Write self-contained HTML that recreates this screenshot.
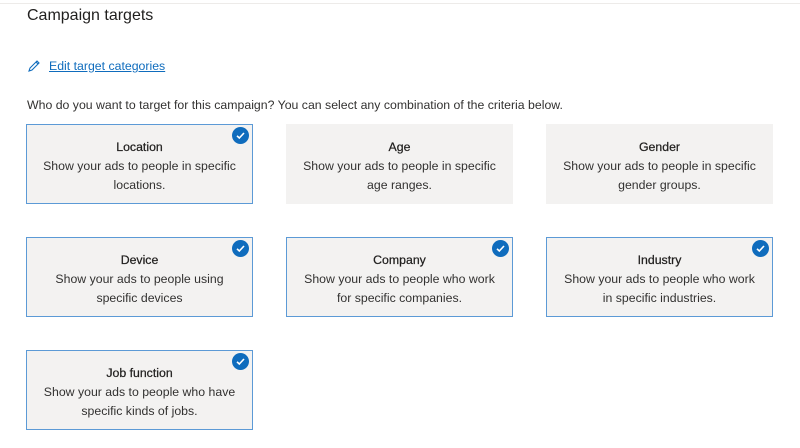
<!DOCTYPE html>
<html><head><style>
body{margin:0;width:800px;height:448px;background:#fff;font-family:"Liberation Sans",sans-serif;color:#323130;position:relative;overflow:hidden}
.top{position:absolute;left:0;top:3px;width:800px;height:1px;background:#edebe9}
h1{position:absolute;left:27px;top:7px;margin:0;font-size:16px;font-weight:normal;color:#201f1e}
.link{position:absolute;left:27px;top:59px;font-size:12.3px;color:#0f6cbd}
.link span{position:absolute;left:22px;top:0px;text-decoration:underline;white-space:nowrap}
.q{position:absolute;left:27px;top:98px;font-size:12.3px;white-space:nowrap}
.card{position:absolute;width:227px;height:80px;background:#f3f2f1;box-sizing:border-box;text-align:center;font-size:12.3px;line-height:19px;padding-top:14px}
.card.sel{border:1px solid #5c9ad6;padding-top:13px}
.card b{font-weight:normal;color:#201f1e;display:block;-webkit-text-stroke:0.25px #201f1e}
.chk{position:absolute;right:3px;top:2px;width:17px;height:17px;border-radius:50%;background:#0f6cbd}
</style></head><body>
<div class="top"></div>
<h1>Campaign targets</h1>
<div class="link"><svg width="14" height="14" viewBox="0 0 14 14" style="position:absolute;left:0;top:0px"><path d="M2 12 L3 9 L10 2 L12 4 L5 11 Z M9 3 L11 5" fill="none" stroke="#0f6cbd" stroke-width="1.1"/></svg><span>Edit target categories</span></div>
<div class="q">Who do you want to target for this campaign? You can select any combination of the criteria below.</div>

<div class="card sel" style="left:26px;top:124px"><b>Location</b>Show your ads to people in specific<br>locations.<div class="chk"><svg width="17" height="17" viewBox="0 0 17 17"><path d="M5 8.8 L7.3 11 L12 6" fill="none" stroke="#fff" stroke-width="1.6"/></svg></div></div>
<div class="card" style="left:286px;top:124px"><b>Age</b>Show your ads to people in specific<br>age ranges.</div>
<div class="card" style="left:546px;top:124px"><b>Gender</b>Show your ads to people in specific<br>gender groups.</div>

<div class="card sel" style="left:26px;top:237px"><b>Device</b>Show your ads to people using<br>specific devices<div class="chk"><svg width="17" height="17" viewBox="0 0 17 17"><path d="M5 8.8 L7.3 11 L12 6" fill="none" stroke="#fff" stroke-width="1.6"/></svg></div></div>
<div class="card sel" style="left:286px;top:237px"><b>Company</b>Show your ads to people who work<br>for specific companies.<div class="chk"><svg width="17" height="17" viewBox="0 0 17 17"><path d="M5 8.8 L7.3 11 L12 6" fill="none" stroke="#fff" stroke-width="1.6"/></svg></div></div>
<div class="card sel" style="left:546px;top:237px"><b>Industry</b>Show your ads to people who work<br>in specific industries.<div class="chk"><svg width="17" height="17" viewBox="0 0 17 17"><path d="M5 8.8 L7.3 11 L12 6" fill="none" stroke="#fff" stroke-width="1.6"/></svg></div></div>

<div class="card sel" style="left:26px;top:350px"><b>Job function</b>Show your ads to people who have<br>specific kinds of jobs.<div class="chk"><svg width="17" height="17" viewBox="0 0 17 17"><path d="M5 8.8 L7.3 11 L12 6" fill="none" stroke="#fff" stroke-width="1.6"/></svg></div></div>
</body></html>
